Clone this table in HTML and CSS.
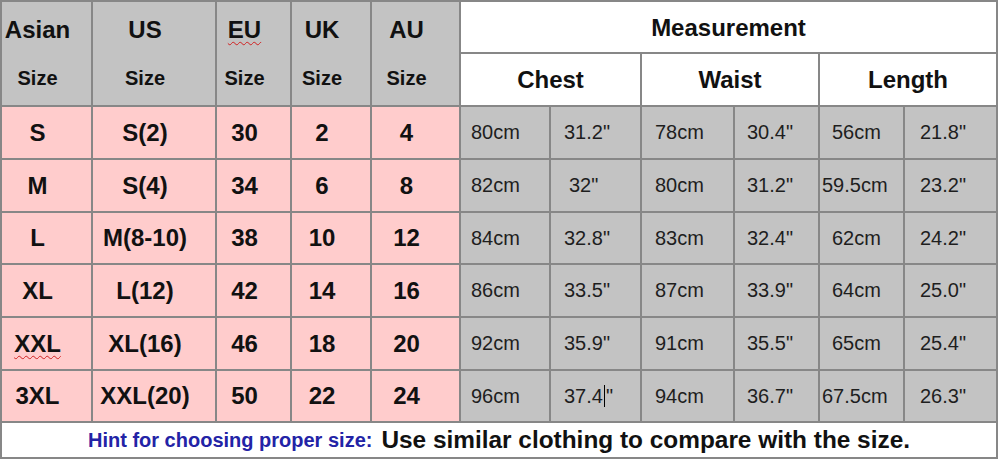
FILE: index.html
```html
<!DOCTYPE html>
<html>
<head>
<meta charset="utf-8">
<link rel="stylesheet" href="styles.css">
</head>
<body>
<div class="chart">
  <div class="hd"><span class="t1">Asian</span><span class="t2">Size</span></div>
  <div class="hd"><span class="t1">US</span><span class="t2">Size</span></div>
  <div class="hd"><span class="t1"><span class="sq">EU</span></span><span class="t2">Size</span></div>
  <div class="hd"><span class="t1">UK</span><span class="t2">Size</span></div>
  <div class="hd"><span class="t1">AU</span><span class="t2">Size</span></div>
  <div class="meas">Measurement</div>
  <div class="sub">Chest</div>
  <div class="sub">Waist</div>
  <div class="sub">Length</div>

  <div class="sz">S</div><div class="sz">S(2)</div><div class="sz">30</div><div class="sz">2</div><div class="sz">4</div>
  <div class="m c1">80cm</div><div class="m c2">31.2"</div><div class="m c3">78cm</div><div class="m c4">30.4"</div><div class="m c5">56cm</div><div class="m c6">21.8"</div>

  <div class="sz">M</div><div class="sz">S(4)</div><div class="sz">34</div><div class="sz">6</div><div class="sz">8</div>
  <div class="m c1">82cm</div><div class="m c2 short">32"</div><div class="m c3">80cm</div><div class="m c4">31.2"</div><div class="m c5 tight">59.5cm</div><div class="m c6">23.2"</div>

  <div class="sz">L</div><div class="sz">M(8-10)</div><div class="sz">38</div><div class="sz">10</div><div class="sz">12</div>
  <div class="m c1">84cm</div><div class="m c2">32.8"</div><div class="m c3">83cm</div><div class="m c4">32.4"</div><div class="m c5">62cm</div><div class="m c6">24.2"</div>

  <div class="sz">XL</div><div class="sz">L(12)</div><div class="sz">42</div><div class="sz">14</div><div class="sz">16</div>
  <div class="m c1">86cm</div><div class="m c2">33.5"</div><div class="m c3">87cm</div><div class="m c4">33.9"</div><div class="m c5">64cm</div><div class="m c6">25.0"</div>

  <div class="sz"><span class="sq">XXL</span></div><div class="sz">XL(16)</div><div class="sz">46</div><div class="sz">18</div><div class="sz">20</div>
  <div class="m c1">92cm</div><div class="m c2">35.9"</div><div class="m c3">91cm</div><div class="m c4">35.5"</div><div class="m c5">65cm</div><div class="m c6">25.4"</div>

  <div class="sz">3XL</div><div class="sz">XXL(20)</div><div class="sz">50</div><div class="sz">22</div><div class="sz">24</div>
  <div class="m c1">96cm</div><div class="m c2">37.4<span class="caret"></span>"</div><div class="m c3">94cm</div><div class="m c4">36.7"</div><div class="m c5 tight">67.5cm</div><div class="m c6">26.3"</div>

  <div class="hint"><span class="hint-lead">Hint for choosing proper size:</span><span class="hint-main">Use similar clothing to compare with the size.</span></div>
</div>
</body>
</html>
```

FILE: styles.css
```css
html, body {
  margin: 0;
  padding: 0;
  background: #ffffff;
}

body {
  font-family: "Liberation Sans", Arial, sans-serif;
  color: #111;
}

.chart {
  display: grid;
  width: 998px;
  box-sizing: border-box;
  padding: 2px;
  gap: 2px;
  background: #878787;
  grid-template-columns: 89px 122px 73px 78px 87px 88px 89px 91px 83px 83px 91px;
  grid-template-rows: 50px 51px 51px 51px 50px 51px 51px 50px 34px;
}

.hd {
  grid-row: span 2;
  background: #c3c3c3;
  display: flex;
  flex-direction: column;
  font-weight: bold;
  padding-right: 18px;
}

.hd .t1,
.hd .t2 {
  flex: 1;
  display: flex;
  align-items: center;
  justify-content: center;
}

.hd .t1 {
  font-size: 24px;
  padding-top: 4px;
}

.hd .t2 {
  font-size: 20px;
  padding-bottom: 2px;
}

.sq {
  text-decoration: underline wavy #d02020;
  text-decoration-thickness: 1px;
  text-underline-offset: 3px;
}

.meas {
  grid-column: span 6;
  background: #ffffff;
  display: flex;
  align-items: center;
  justify-content: center;
  font-weight: bold;
  font-size: 24px;
  padding-top: 2px;
}

.sub {
  grid-column: span 2;
  background: #ffffff;
  display: flex;
  align-items: center;
  justify-content: center;
  font-weight: bold;
  font-size: 24px;
}

.sz {
  background: #ffcccc;
  display: flex;
  align-items: center;
  justify-content: center;
  font-weight: bold;
  font-size: 24px;
  padding-right: 18px;
}

.m {
  background: #c3c3c3;
  display: flex;
  align-items: center;
  font-size: 20px;
  color: #1e1e1e;
}

.c1 { padding-left: 10px; }
.c2 { padding-left: 13px; }
.c3 { padding-left: 13px; }
.c4 { padding-left: 12px; }
.c5 { padding-left: 12px; }
.c6 { padding-left: 15px; }
.c2.short { padding-left: 18px; }
.c5.tight { padding-left: 2px; }

.caret {
  display: inline-block;
  width: 1px;
  height: 22px;
  background: #000;
  margin: 0 1px;
}

.hint {
  grid-column: span 11;
  background: #ffffff;
  display: flex;
  align-items: center;
  justify-content: center;
  gap: 9px;
  font-weight: bold;
  white-space: pre;
}

.hint-lead {
  color: #2323a6;
  font-size: 20px;
}

.hint-main {
  color: #111;
  font-size: 24.4px;
}
```
